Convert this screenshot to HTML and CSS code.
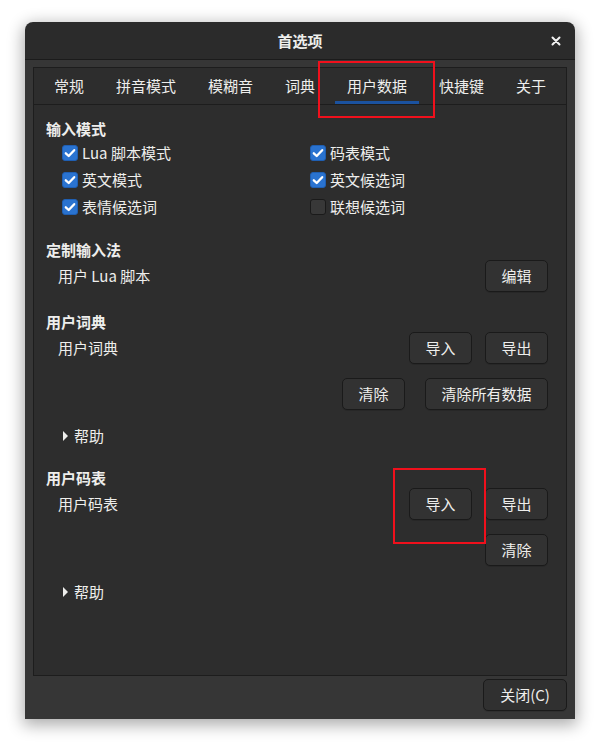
FILE: index.html
```html
<!DOCTYPE html>
<html lang="zh-CN">
<head>
<meta charset="utf-8">
<title>首选项</title>
<link rel="stylesheet" href="styles.css">
</head>
<body>
<div class="window">
  <div class="titlebar">
    <span></span>
    <span class="title">首选项</span>
    <span class="close"><svg width="10" height="10" viewBox="0 0 10 10"><path d="M1.5 1.5L8.5 8.5M8.5 1.5L1.5 8.5" stroke="#f2f2f2" stroke-width="2" stroke-linecap="round"/></svg></span>
  </div>
  <div class="body">
    <div class="frame">
      <div class="tabs">
        <div class="tab">常规</div>
        <div class="tab">拼音模式</div>
        <div class="tab">模糊音</div>
        <div class="tab">词典</div>
        <div class="tab active">用户数据</div>
        <div class="tab">快捷键</div>
        <div class="tab">关于</div>
      </div>
      <div class="content">
        <section class="section first">
          <div class="heading">输入模式</div>
          <div class="checks">
            <label class="check"><span class="box on"><svg width="16" height="16" viewBox="0 0 16 16"><path d="M3.8 8.3L6.7 11L12.2 5.2" fill="none" stroke="#fff" stroke-width="2.3" stroke-linecap="round" stroke-linejoin="round"/></svg></span>Lua 脚本模式</label>
            <label class="check"><span class="box on"><svg width="16" height="16" viewBox="0 0 16 16"><path d="M3.8 8.3L6.7 11L12.2 5.2" fill="none" stroke="#fff" stroke-width="2.3" stroke-linecap="round" stroke-linejoin="round"/></svg></span>码表模式</label>
            <label class="check"><span class="box on"><svg width="16" height="16" viewBox="0 0 16 16"><path d="M3.8 8.3L6.7 11L12.2 5.2" fill="none" stroke="#fff" stroke-width="2.3" stroke-linecap="round" stroke-linejoin="round"/></svg></span>英文模式</label>
            <label class="check"><span class="box on"><svg width="16" height="16" viewBox="0 0 16 16"><path d="M3.8 8.3L6.7 11L12.2 5.2" fill="none" stroke="#fff" stroke-width="2.3" stroke-linecap="round" stroke-linejoin="round"/></svg></span>英文候选词</label>
            <label class="check"><span class="box on"><svg width="16" height="16" viewBox="0 0 16 16"><path d="M3.8 8.3L6.7 11L12.2 5.2" fill="none" stroke="#fff" stroke-width="2.3" stroke-linecap="round" stroke-linejoin="round"/></svg></span>表情候选词</label>
            <label class="check"><span class="box"></span>联想候选词</label>
          </div>
        </section>
        <section class="section">
          <div class="heading">定制输入法</div>
          <div class="row">
            <span class="label">用户 Lua 脚本</span>
            <div class="btns"><button class="btn">编辑</button></div>
          </div>
        </section>
        <section class="section">
          <div class="heading">用户词典</div>
          <div class="row">
            <span class="label">用户词典</span>
            <div class="btns"><button class="btn">导入</button><button class="btn">导出</button></div>
          </div>
          <div class="row end">
            <div class="btns wide"><button class="btn">清除</button><button class="btn">清除所有数据</button></div>
          </div>
          <div class="expander"><span class="arrow"></span>帮助</div>
        </section>
        <section class="section">
          <div class="heading">用户码表</div>
          <div class="row">
            <span class="label">用户码表</span>
            <div class="btns"><button class="btn">导入</button><button class="btn">导出</button></div>
          </div>
          <div class="row end">
            <div class="btns"><button class="btn">清除</button></div>
          </div>
          <div class="expander"><span class="arrow"></span>帮助</div>
        </section>
      </div>
    </div>
    <div class="actions"><button class="btn close-btn">关闭(C)</button></div>
  </div>
  <div class="mark mark-tab"></div>
  <div class="mark mark-btn"></div>
</div>
</body>
</html>
```
FILE: styles.css
```css
html, body {
  margin: 0;
  padding: 0;
  background: #ffffff;
}
body {
  font-family: "Noto Sans CJK SC", "Noto Sans", sans-serif;
  font-size: 15px;
  color: #eeeeec;
  padding: 22px 0 0 25px;
  height: 748px;
  box-sizing: border-box;
  overflow: hidden;
}
.window {
  position: relative;
  width: 550px;
  height: 697px;
  border-radius: 8px 8px 0 0;
  box-shadow: 0 4px 16px 2px rgba(0, 0, 0, 0.33);
  display: flex;
  flex-direction: column;
}
.titlebar {
  height: 37px;
  flex: none;
  background: #2b2b2b;
  border-bottom: 1px solid #1b1b1b;
  border-radius: 8px 8px 0 0;
  display: grid;
  grid-template-columns: 1fr auto 1fr;
  align-items: center;
}
.title {
  font-weight: bold;
  font-size: 15px;
  line-height: 20px;
}
.close {
  justify-self: end;
  margin-right: 14px;
  display: flex;
}
.body {
  flex: 1;
  background: #363636;
  padding: 7px 8px 8px 8px;
  display: flex;
  flex-direction: column;
}
.frame {
  height: 609px;
  box-sizing: border-box;
  border: 1px solid #1d1d1d;
  background: #2d2d2d;
  display: flex;
  flex-direction: column;
}
.tabs {
  height: 36px;
  flex: none;
  border-bottom: 1px solid #1d1d1d;
  display: flex;
  padding-left: 4px;
}
.tab {
  margin: 0 4px;
  padding: 0 12px;
  display: flex;
  align-items: center;
  line-height: 20px;
  padding-bottom: 1px;
}
.tab.active {
  box-shadow: inset 0 -3px 0 #1b529f;
}
.content {
  flex: 1;
  padding: 14px 18px 0 12px;
}
.section {
  margin-top: 20px;
}
.section.first {
  margin-top: 0;
}
.heading {
  font-weight: bold;
  line-height: 20px;
  height: 20px;
}
.checks {
  display: grid;
  grid-template-columns: 248px 1fr;
  grid-auto-rows: 27px;
  padding-left: 16px;
}
.check {
  display: flex;
  align-items: center;
  gap: 4px;
  line-height: 20px;
}
.box {
  width: 16px;
  height: 16px;
  box-sizing: border-box;
  border-radius: 3px;
  border: 1px solid #1a1a1a;
  background: #383838;
  display: flex;
  align-items: center;
  justify-content: center;
  flex: none;
}
.box.on {
  background: #2a73d0;
  border-color: #1f5fb3;
}
.box svg {
  flex: none;
}
.row {
  height: 32px;
  display: flex;
  align-items: center;
  justify-content: space-between;
}
.row + .row {
  margin-top: 14px;
}
.row.end {
  justify-content: flex-end;
}
.label {
  padding-left: 12px;
  line-height: 20px;
}
.btns {
  display: flex;
  gap: 13px;
}
.btns.wide {
  gap: 20px;
}
.btn {
  height: 32px;
  box-sizing: border-box;
  padding: 0 15.5px;
  background: #323232;
  border: 1px solid #1a1a1a;
  border-radius: 5px;
  color: #eeeeec;
  font-family: inherit;
  font-size: 15px;
  line-height: 20px;
  box-shadow: 0 1px 0 rgba(0, 0, 0, 0.12);
}
.expander {
  margin-top: 14px;
  height: 24px;
  display: flex;
  align-items: center;
  padding-left: 17px;
  line-height: 20px;
}
.arrow {
  width: 0;
  height: 0;
  border-left: 5px solid #eeeeec;
  border-top: 5px solid transparent;
  border-bottom: 5px solid transparent;
  margin-right: 6px;
}
.actions {
  display: flex;
  justify-content: flex-end;
  padding-top: 3px;
}
.close-btn {
  width: 84px;
  padding: 0;
  background: #303030;
}
.mark {
  position: absolute;
  border: 2px solid #f0101c;
  box-sizing: border-box;
}
.mark-tab {
  left: 293px;
  top: 39px;
  width: 117px;
  height: 57px;
}
.mark-btn {
  left: 368px;
  top: 446px;
  width: 93px;
  height: 76px;
}
```
